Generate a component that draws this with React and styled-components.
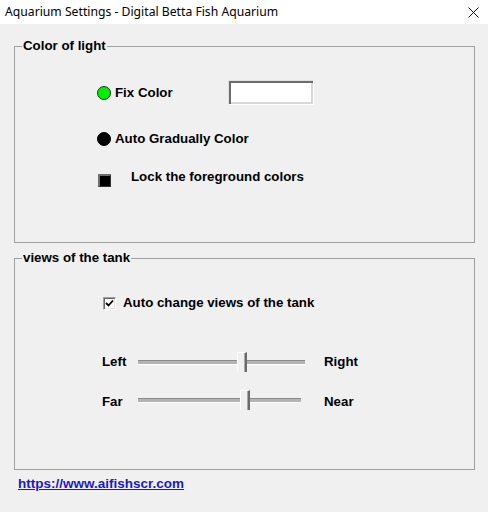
import React from "react";
import styled, { createGlobalStyle } from "styled-components";

const Global = createGlobalStyle`
  html, body { margin: 0; padding: 0; background: #f0f0f0; }
  body { width: 488px; height: 512px; overflow: hidden; font-family: "Liberation Sans", Arial, sans-serif; }
  * { box-sizing: border-box; }
`;

const Window = styled.div`
  width: 488px;
  height: 512px;
  background: #f0f0f0;
  display: flex;
  flex-direction: column;
`;

const TitleBar = styled.div`
  height: 24px;
  background: #ffffff;
  display: flex;
  align-items: center;
  justify-content: space-between;
  padding: 0 9px 0 5px;
`;

const Title = styled.span`
  font-family: "Noto Sans", "Open Sans", sans-serif;
  font-size: 12.2px;
  color: #000;
  line-height: 16px;
`;

const CloseIcon = () => (
  <svg width="11" height="11" viewBox="0 0 11 11">
    <path d="M0.5 0.5 L10.5 10.5 M10.5 0.5 L0.5 10.5" stroke="#111" strokeWidth="1" fill="none" />
  </svg>
);

const Body = styled.div`
  display: flex;
  flex-direction: column;
  padding: 14px 13px 0 14px;
`;

const Group = styled.fieldset`
  margin: ${(p) => p.$mt || 0}px 0 0 0;
  padding: 0 7px;
  border: 1px solid #a0a0a0;
  min-width: 0;
`;

const Legend = styled.legend`
  padding: 0 1px;
  font-size: 13.3px;
  font-weight: bold;
  line-height: 16px;
  color: #000;
`;

const Content = styled.div`
  height: ${(p) => p.$h}px;
  display: flex;
  flex-direction: column;
`;

const Row = styled.div`
  display: flex;
  align-items: ${(p) => p.$align || "center"};
  height: ${(p) => p.$h || 16}px;
  margin-top: ${(p) => p.$mt || 0}px;
  margin-left: ${(p) => p.$ml || 0}px;
`;

const Label = styled.span`
  font-size: 13.3px;
  font-weight: bold;
  line-height: 16px;
  color: #000;
  white-space: nowrap;
  flex-shrink: 0;
  width: ${(p) => (p.$w ? `${p.$w}px` : "auto")};
  margin-left: ${(p) => p.$ml || 0}px;
  padding-top: ${(p) => p.$pt || 0}px;
`;

const Radio = styled.span`
  width: 14px;
  height: 14px;
  border-radius: 50%;
  background: ${(p) => p.$fill};
  border: 1.5px solid ${(p) => (p.$fill === "#000" ? "#000" : "#1c3a1c")};
  flex-shrink: 0;
`;

const ColorBox = styled.div`
  width: 86px;
  height: 25px;
  background: #fff;
  border: 1px solid;
  border-color: #e0e0e0 #ffffff #ffffff #e0e0e0;
  box-shadow: inset 2px 2px 0 #6d6d6d, inset -2px -2px 0 #d8d8d8;
`;

const Square = styled.span`
  width: 13px;
  height: 13px;
  background: #000;
  border-top: 2px solid #6e6e6e;
  border-left: 2px solid #6e6e6e;
  border-right: 1px solid #333;
  border-bottom: 1px solid #333;
  margin-top: 5px;
  margin-left: 1px;
  flex-shrink: 0;
`;

const CheckBox = styled.span`
  width: 13px;
  height: 13px;
  background: #fff;
  border: 1px solid;
  border-color: #a0a0a0 #fff #fff #a0a0a0;
  box-shadow: inset 1px 1px 0 #696969, inset -1px -1px 0 #e3e3e3;
  display: flex;
  align-items: center;
  justify-content: center;
  flex-shrink: 0;
`;

const SliderRow = styled.div`
  display: flex;
  align-items: center;
  height: 20px;
  margin-top: ${(p) => p.$mt}px;
  margin-left: 80px;
`;

const Track = styled.div`
  position: relative;
  width: ${(p) => p.$w}px;
  height: 3px;
  margin-right: ${(p) => p.$mr}px;
  background: #b4b4b4;
  border-top: 1px solid #8a8a8a;
  border-bottom: 1px solid #ffffff;
  box-sizing: content-box;
  flex-shrink: 0;
`;

const Thumb = styled.div`
  position: absolute;
  top: -9px;
  width: 10px;
  height: 20px;
  background: #f0f0f0;
  border-left: 1px solid #ffffff;
  border-top: 1px solid #ffffff;
  border-right: 2px solid #6b6b6b;
  box-shadow: inset -1px 0 0 #a8a8a8;
`;

const Link = styled.a`
  margin: 6px 0 0 4px;
  font-size: 13.5px;
  font-weight: bold;
  line-height: 16px;
  color: #1a1ac8;
  text-decoration: underline;
  align-self: flex-start;
`;

const Slider = ({ left, right, width, thumb, mr, mt, pt }) => (
  <SliderRow $mt={mt}>
    <Label $w={36} $pt={pt}>{left}</Label>
    <Track $w={width} $mr={mr}>
      <Thumb style={{ left: `${thumb}px` }} />
    </Track>
    <Label $pt={pt}>{right}</Label>
  </SliderRow>
);

export default function App() {
  return (
    <Window>
      <Global />
      <TitleBar>
        <Title>Aquarium Settings - Digital Betta Fish Aquarium</Title>
        <CloseIcon />
      </TitleBar>
      <Body>
        <Group>
          <Legend>Color of light</Legend>
          <Content $h={188}>
            <Row $h={25} $mt={26} $ml={75}>
              <Radio $fill="#00f000" />
              <Label $w={113} $ml={4}>Fix Color</Label>
              <ColorBox />
            </Row>
            <Row $mt={26} $ml={75}>
              <Radio $fill="#000" />
              <Label $ml={4}>Auto Gradually Color</Label>
            </Row>
            <Row $mt={22} $ml={75} $align="flex-start" $h={18}>
              <Square />
              <Label $ml={20}>Lock the foreground colors</Label>
            </Row>
          </Content>
        </Group>
        <Group $mt={7}>
          <Legend>views of the tank</Legend>
          <Content $h={203}>
            <Row $mt={29} $ml={81}>
              <CheckBox>
                <svg width="9" height="9" viewBox="0 0 9 9">
                  <path d="M1 4 L3.5 6.5 L8 1.5" stroke="#000" strokeWidth="1.8" fill="none" />
                </svg>
              </CheckBox>
              <Label $ml={7}>Auto change views of the tank</Label>
            </Row>
            <Slider mt={41} left="Left" right="Right" width={167} thumb={99} mr={19} />
            <Slider mt={18} left="Far" right="Near" width={163} thumb={102} mr={23} pt={4} />
          </Content>
        </Group>
        <Link href="#">https://www.aifishscr.com</Link>
      </Body>
    </Window>
  );
}
